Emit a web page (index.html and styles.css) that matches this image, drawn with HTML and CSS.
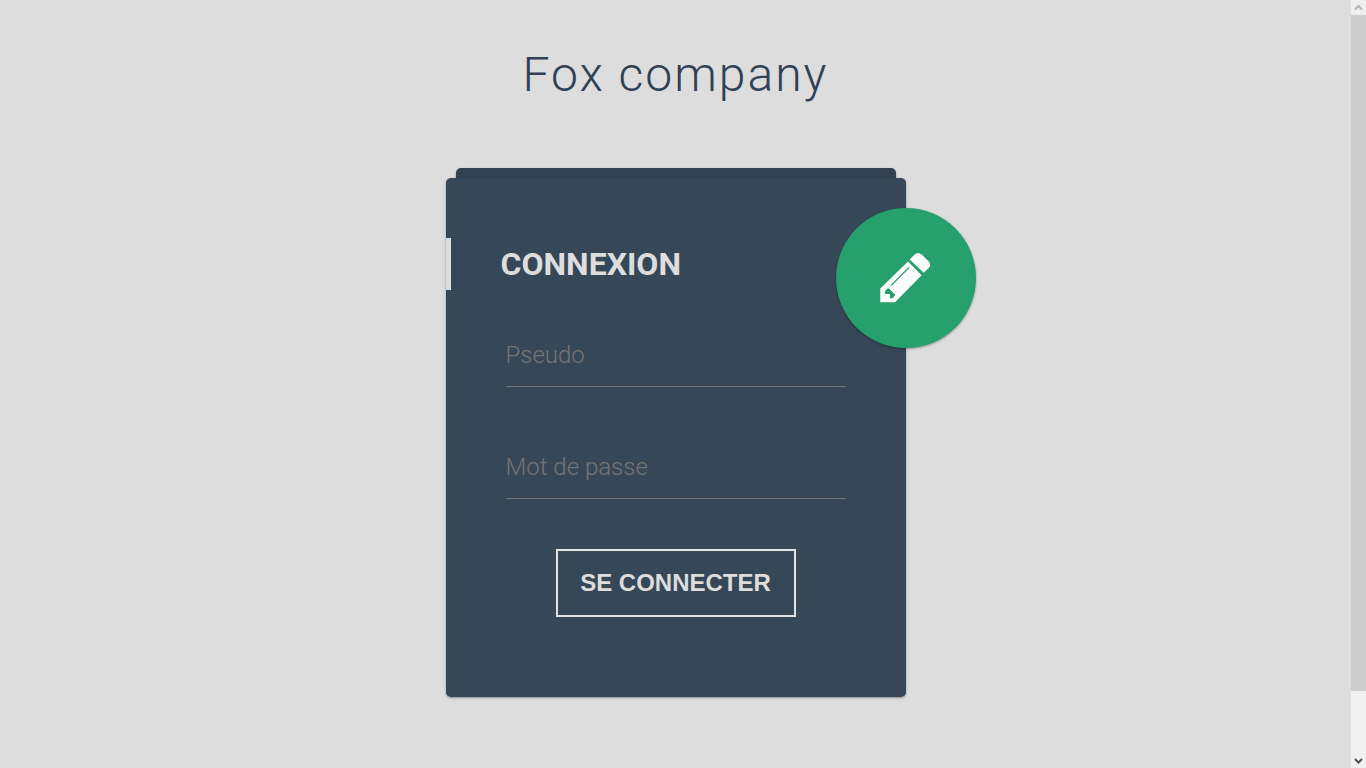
FILE: index.html
```html
<!DOCTYPE html>
<html lang="fr">
<head>
<meta charset="utf-8">
<title>Fox company</title>
<link rel="stylesheet" href="styles.css">
</head>
<body>
<div class="page">
  <main class="content">
    <h1 class="brand">Fox company</h1>
    <div class="stack">
      <div class="card-back"></div>
      <section class="card">
        <h2 class="card-title">Connexion</h2>
        <form class="form">
          <div class="field">
            <input class="field-input" type="text" id="pseudo" placeholder="Pseudo" aria-label="Pseudo">
          </div>
          <div class="field">
            <input class="field-input" type="password" id="password" placeholder="Mot de passe" aria-label="Mot de passe">
          </div>
          <button class="submit" type="submit">Se connecter</button>
        </form>
        <button class="toggle" type="button" aria-label="Inscription">
          <svg class="pencil" viewBox="0 0 52 52" aria-hidden="true">
            <path fill="#fff" d="M.3 36.500 28 9.500 41.600 23.200 15 50.300H.3Z"/>
            <path fill="#fff" d="M29.700 7.500 34.700 2.500Q38.200 -.5 41.700 2.500L48.700 9.500Q51.700 13 48.700 16L43.700 20.800Z"/>
            <path stroke="#26a06d" stroke-width="1.200" fill="none" d="M11 33.500 29 15.500"/>
            <path fill="#26a06d" d="M5 39 7.500 36.500H9.300L10.500 38 15 42.500V43.500L12.500 46.300H9.800V42H5Z"/>
          </svg>
        </button>
      </section>
    </div>
  </main>
  <div class="scrollbar" aria-hidden="true">
    <svg class="scroll-arrow" viewBox="0 0 15 15"><path fill="none" stroke="#b4b4b4" stroke-width="2" d="M4 9.500 7.500 6 11 9.500"/></svg>
    <div class="scroll-track"><div class="scroll-thumb"></div></div>
    <svg class="scroll-arrow" viewBox="0 0 15 15"><path fill="none" stroke="#505050" stroke-width="2" d="M4 6 7.500 9.500 11 6"/></svg>
  </div>
</div>
</body>
</html>
```
FILE: styles.css
```css
* {
  box-sizing: border-box;
}

body {
  margin: 0;
  background: #ddd;
  font-family: Roboto, sans-serif;
}

.page {
  display: flex;
  height: 100vh;
}

.content {
  flex: 1;
  display: flex;
  flex-direction: column;
  align-items: center;
  padding: 47px 0 0;
  overflow: hidden;
}

.brand {
  margin: 0 0 65px;
  color: #314154;
  font-size: 48px;
  font-weight: 300;
  line-height: 56px;
  letter-spacing: 2px;
}

.stack {
  width: 460px;
  max-width: 100%;
}

.card-back {
  height: 10px;
  margin: 0 10px;
  border-radius: 5px 5px 0 0;
  background: #324252;
  box-shadow: 0 1px 3px rgba(0, 0, 0, .12), 0 1px 2px rgba(0, 0, 0, .24);
}

.card {
  position: relative;
  padding: 60px 0 80px;
  border-radius: 5px;
  background: #364757;
  box-shadow: 0 1px 3px rgba(0, 0, 0, .12), 0 1px 2px rgba(0, 0, 0, .24);
}

.card-title {
  margin: 0 0 35px;
  padding: 10px 0 10px 50px;
  border-left: 5px solid #ddd;
  color: #ddd;
  font-size: 32px;
  font-weight: 700;
  line-height: 32px;
  text-transform: uppercase;
}

.form {
  display: flex;
  flex-direction: column;
  padding: 0 60px;
}

.field {
  margin-bottom: 50px;
}

.field-input {
  display: block;
  width: 100%;
  height: 62px;
  padding: 0 0 2px;
  border: 0;
  border-bottom: 1px solid #757575;
  background: none;
  color: #ddd;
  font-family: Roboto, sans-serif;
  font-size: 24px;
  font-weight: 300;
  outline: 0;
}

.field-input::placeholder {
  color: #757575;
}

.submit {
  align-self: center;
  width: 240px;
  height: 68px;
  padding: 0;
  border: 2px solid #e3e3e3;
  background: none;
  color: #ddd;
  font-family: "Liberation Sans", sans-serif;
  font-size: 24px;
  font-weight: 700;
  text-transform: uppercase;
}

.toggle {
  position: absolute;
  top: 30px;
  right: -70px;
  display: flex;
  align-items: center;
  justify-content: center;
  width: 140px;
  height: 140px;
  padding: 0;
  border: 0;
  border-radius: 50%;
  background: #26a06d;
  box-shadow: 0 1px 3px rgba(0, 0, 0, .12), 0 1px 2px rgba(0, 0, 0, .24);
}

.pencil {
  width: 52px;
  height: 52px;
}

.scrollbar {
  display: flex;
  flex-direction: column;
  width: 15px;
  background: #f0f0f0;
}

.scroll-arrow {
  width: 15px;
  height: 15px;
}

.scroll-track {
  flex: 1;
}

.scroll-thumb {
  height: 91.6%;
  background: #cdcdcd;
}
```
